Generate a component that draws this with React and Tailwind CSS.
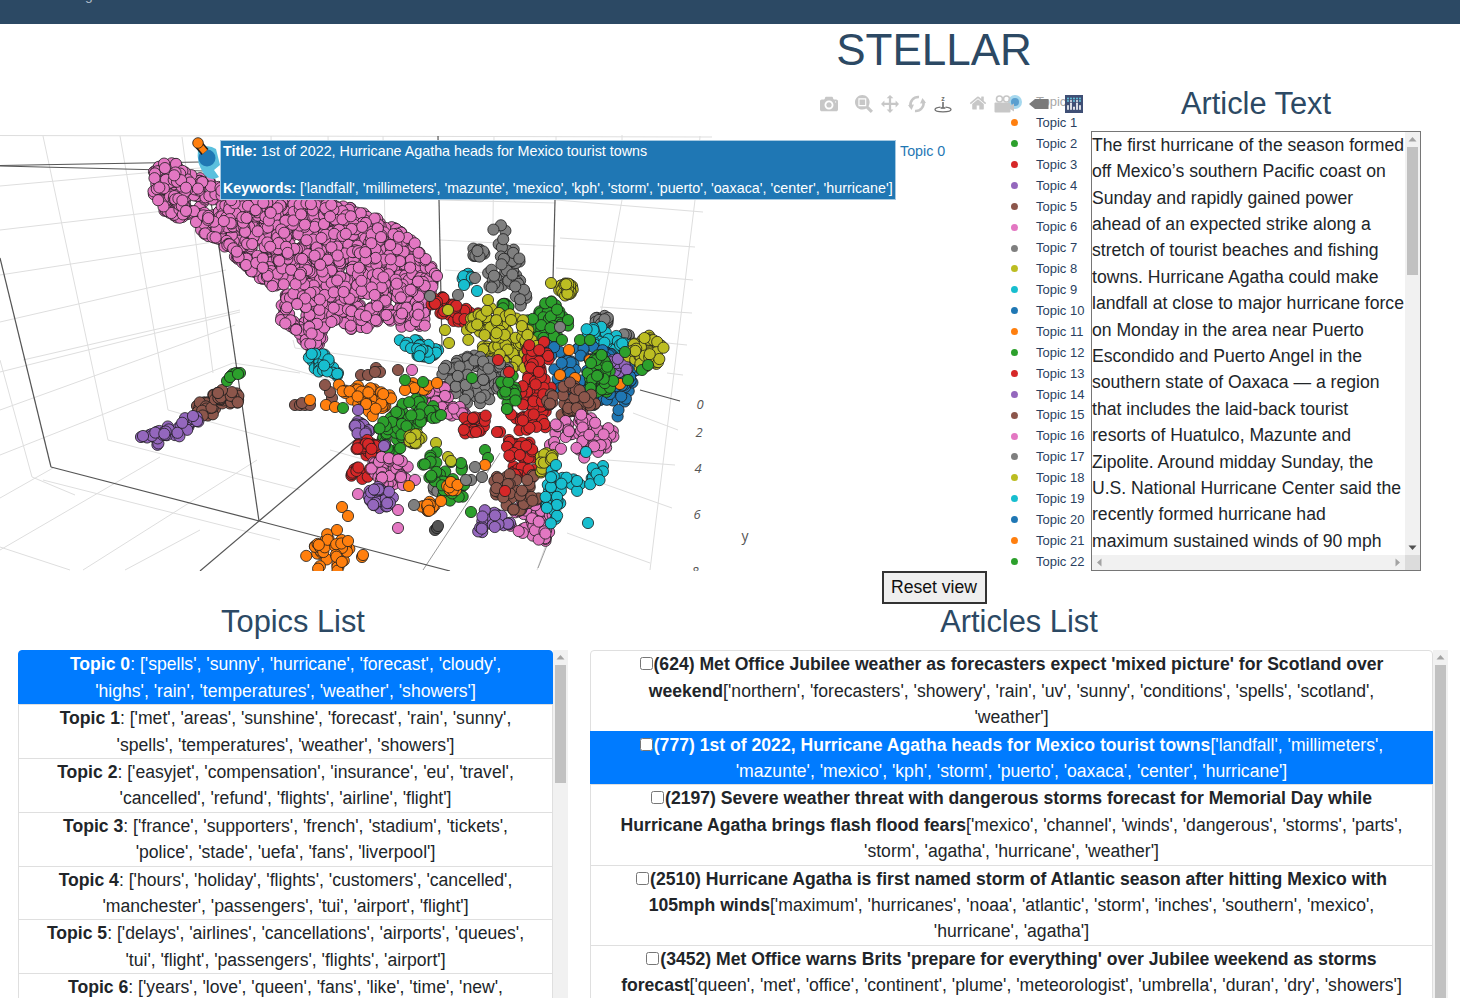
import React from "react";

const C = { blue:"#1f77b4", orange:"#ff7f0e", green:"#2ca02c", red:"#d62728", purple:"#9467bd", brown:"#8c564b", pink:"#e377c2", gray:"#7f7f7f", olive:"#bcbd22", cyan:"#17becf" };

function rng(seed){ let a=seed; return ()=>{ a|=0; a=a+0x6D2B79F5|0; let t=Math.imul(a^a>>>15,1|a); t=t+Math.imul(t^t>>>7,61|t)^t; return ((t^t>>>14)>>>0)/4294967296; }; }
const R = rng(4242);
function inside(p,x,y){ let c=false; for(let i=0,j=p.length-1;i<p.length;j=i++){ const [xi,yi]=p[i],[xj,yj]=p[j]; if((yi>y)!==(yj>y)&&x<(xj-xi)*(y-yi)/(yj-yi)+xi) c=!c; } return c; }
const pts=[];
function P(col,n0,poly,holes=[]){ const n=Math.round(n0*1.5); const xs=poly.map(q=>q[0]),ys=poly.map(q=>q[1]); const x0=Math.min(...xs),x1=Math.max(...xs),y0=Math.min(...ys),y1=Math.max(...ys); let k=0,g=0; while(k<n&&g<n*300){ g++; const x=x0+R()*(x1-x0),y=y0+R()*(y1-y0); if(inside(poly,x,y)&&!holes.some(h=>Math.hypot(h[0]-x,h[1]-y)<h[2]+5.5)){ pts.push([x,y,col]); k++; } } }
function E(col,cx,cy,rx,ry,n0){ const n=Math.round(n0*1.5); for(let i=0;i<n;i++){ const a=R()*6.283,r=Math.sqrt(R()); pts.push([cx+Math.cos(a)*r*rx,cy+Math.sin(a)*r*ry,col]); } }
function S(col,...list){ list.forEach(([x,y])=>pts.push([x,y,col])); }

S(C.red,[303,232]);
P(C.pink,1300,[[150,172],[170,158],[185,172],[230,190],[343,205],[387,222],[413,240],[437,275],[428,300],[425,327],[397,327],[380,320],[360,333],[333,320],[320,345],[313,353],[297,333],[280,323],[283,290],[263,283],[220,243],[163,210],[153,195]],
  [[193,203,2],[210,207,2],[258,247,1],[297,242,1],[290,288,1],[367,302,1],[392,302,1],[297,313,2],[188,222,1],[345,270,0.5]]);
S(C.pink,[437,276]);
P(C.gray,34,[[492,212],[503,225],[516,250],[527,278],[527,305],[520,310],[512,288],[490,288],[484,275],[495,262],[498,240],[491,225]]);
E(C.gray,478,252,7,5,9);
E(C.cyan,467,277,5,4,5); S(C.cyan,[477,291],[464,285]); S(C.gray,[475,278]);
E(C.gray,601,320,8,6,14); E(C.gray,627,336,6,2,4);
E(C.olive,566,289,7,7,26); S(C.olive,[551,283]);
P(C.red,26,[[428,292],[445,298],[482,315],[478,327],[450,322],[430,305]]);
S(C.gray,[430,296],[458,295],[561,326]);
P(C.green,38,[[525,318],[550,297],[570,322],[566,335],[545,340],[525,335]]); E(C.green,505,306,4,3,5); S(C.green,[568,320]);
P(C.olive,75,[[460,325],[490,305],[530,322],[538,350],[520,375],[500,365],[470,345]]);
S(C.olive,[448,310],[445,330],[449,343],[511,320],[488,300]);
P(C.cyan,32,[[583,330],[600,325],[632,345],[620,360],[590,348]]);
P(C.blue,70,[[540,345],[590,345],[640,365],[628,400],[617,418],[595,410],[550,382]]);
E(C.purple,619,366,11,8,15);
P(C.olive,40,[[632,345],[650,335],[667,345],[665,362],[640,368],[628,358]]);
S(C.orange,[569,350],[560,375],[575,378],[620,384],[590,360]);
P(C.red,62,[[528,340],[546,340],[552,380],[546,430],[512,432],[510,400],[526,380]]);
P(C.green,34,[[586,365],[600,350],[615,375],[610,395],[590,392]]); S(C.green,[628,380],[642,370],[648,365],[562,340],[580,340],[590,340],[625,352]);
P(C.brown,32,[[542,400],[570,382],[600,400],[590,416],[555,416],[545,410]]); 
S(C.gray,[560,327]);
P(C.gray,62,[[440,368],[470,352],[508,362],[510,385],[480,410],[462,403],[440,385]]);
S(C.green,[472,378]);
P(C.green,12,[[500,375],[520,375],[515,405],[505,410]]);
S(C.red,[498,360],[509,372]);
// left cyan
P(C.cyan,20,[[302,355],[322,352],[340,370],[335,380],[315,370]]);
P(C.cyan,20,[[395,340],[420,340],[442,352],[425,360],[405,350]]);
S(C.pink,[412,370]);
S(C.brown,[398,370],[332,398],[330,392],[325,385],[361,375],[368,375],[376,368],[380,372],[375,372]);
P(C.pink,16,[[416,390],[448,385],[448,415],[425,412]]);
E(C.pink,458,412,10,6,8);
P(C.orange,36,[[337,382],[360,385],[395,395],[390,405],[375,420],[365,410],[345,395]]);
E(C.orange,420,386,9,5,5); S(C.orange,[405,390],[437,383]);
S(C.brown,[295,405],[300,405],[305,405],[310,405],[302,403]); S(C.orange,[310,400],[326,405],[335,407]); S(C.green,[343,408]); S(C.purple,[358,410]);
E(C.purple,362,428,8,8,16);
P(C.green,55,[[395,402],[430,395],[440,415],[420,430],[400,450],[385,455],[378,430]]);
S(C.green,[405,380],[423,382],[441,415]);
E(C.red,367,448,11,8,22);
S(C.purple,[385,445],[384,446]);
E(C.olive,416,439,8,5,13); S(C.olive,[436,443]);
E(C.red,361,474,14,7,8);
E(C.pink,390,470,20,15,34); S(C.pink,[358,494],[403,485],[398,510],[401,477],[415,480]);
E(C.purple,380,497,13,12,22);
E(C.gray,447,484,18,13,12);
P(C.green,24,[[420,460],[440,450],[467,470],[465,498],[450,505],[430,480]]);
S(C.green,[485,450],[488,458],[461,463],[471,512]);
S(C.olive,[448,457],[451,461]);
E(C.orange,453,486,6,5,9); E(C.orange,428,506,7,5,11);
S(C.orange,[441,501],[485,465],[342,507],[348,516],[409,486]);
S(C.gray,[414,505],[471,480],[482,477],[475,467],[466,480]);
S("#555555",[435,530],[437,528],[438,526]); S(C.pink,[398,528]);
P(C.orange,13,[[303,557],[318,535],[330,530],[328,560],[318,571],[308,571]]);
P(C.orange,11,[[336,540],[350,540],[350,570],[332,571]]); S(C.orange,[362,557],[363,555],[348,541],[337,530]);
// lower right
P(C.pink,38,[[546,425],[585,413],[615,430],[615,445],[585,458],[550,446]]);
P(C.red,16,[[455,420],[490,412],[490,430],[465,436]]); S(C.red,[476,432],[500,432],[497,432],[509,440],[517,452]);
P(C.red,26,[[505,440],[535,440],[535,480],[512,478]]);
P(C.pink,38,[[507,525],[520,500],[555,505],[558,530],[545,542],[525,535]]);
P(C.brown,30,[[492,477],[535,470],[540,497],[522,515],[497,500]]); S(C.red,[505,491]);
P(C.olive,14,[[536,450],[555,452],[548,470],[543,482],[540,470]]);
P(C.purple,18,[[477,508],[510,512],[512,525],[487,530],[478,535]]);
P(C.cyan,32,[[548,470],[575,472],[605,465],[605,480],[585,488],[562,497],[556,520],[552,532],[545,500]]); S(C.cyan,[588,523],[586,452],[556,465]);
// far left
E(C.brown,205,410,11,9,18); E(C.brown,226,398,14,8,22); S(C.brown,[222,390],[218,393]);
S(C.green,[227,381],[231,376],[233,374],[236,373],[240,373],[230,377],[238,374]);
P(C.purple,32,[[145,437],[155,446],[180,437],[200,427],[198,415],[185,418],[155,432]]); S(C.purple,[141,437],[143,436],[197,421],[193,416]);

const light = [
 [43,136,108,440],[120,136,168,410],[182,137,213,373],[0,360,32,477],
 [0,186,200,168],[0,230,215,205],[0,275,226,240],[0,322,226,270],[23,360,240,310],[0,372,240,312],[0,410,235,325],[0,455,233,363],[108,440,300,490],[168,410,300,447],[233,363,300,373],
 [0,547,70,570],[43,480,280,540],[0,550,160,457],[0,498,53,468],[83,570,257,460],[32,477,75,495],[125,570,200,530],
 [695,200,650,570],[622,200,596,340],[494,136,493,223],
 [556,200,703,212],[560,238,695,247],[556,268,693,280],[600,307,692,313],[667,343,687,345],[667,373,683,375],[633,413,678,430],[607,460,675,465],[593,480,672,508],[567,533,650,563],
 [440,200,556,203],[440,240,556,246],[445,270,520,275],[0,135.5,712,137],[271,136,273,205],[328,136,330,205],[383,136,385,225],[556,136,556,200],[622,135,622,200],[700,136,695,200],
 [537,570,550,533],[293,340,295,348],[295,348,440,368],[260,360,358,388],[330,450,430,478],
];
const dark = [
 [0,258,51,467],[51,467,259,521],[259,521,450,571],[218,240,259,521],[259,521,200,571],[259,521,355,440],
 [0,165.5,200,162],[0,166,205,171],[439,200,442,347],[555,200,553,280],[640,390,680,401],[205,171,218,240],[438,136,439,200],
];
const mid = [[423,570,500,453],[538,568,565,500]];

function Plot3D(){
  return (
    <svg className="block" width="1091" height="487" viewBox="0 84 1091 487">
      {light.map((l,i)=><line key={i} x1={l[0]} y1={l[1]} x2={l[2]} y2={l[3]} stroke="#dedede" strokeWidth="1"/>)}
      {mid.map((l,i)=><line key={i} x1={l[0]} y1={l[1]} x2={l[2]} y2={l[3]} stroke="#9a9a9a" strokeWidth="1"/>)}
      {dark.map((l,i)=><line key={i} x1={l[0]} y1={l[1]} x2={l[2]} y2={l[3]} stroke="#555555" strokeWidth="1.2"/>)}
      {pts.map((p,i)=><circle key={i} cx={p[0].toFixed(1)} cy={p[1].toFixed(1)} r="5.6" fill={p[2]} stroke="#1c1c1c" strokeWidth="0.8"/>)}
      {/* hovered marker */}
      <path d="M198 150 Q207 143 216 149 L220 165 L214 170 L219 177 Q210 182 204 174 Q196 163 198 150Z" fill="#5bc0de"/>
      <circle cx="207" cy="158" r="8.5" fill="#1f77b4"/>
      <line x1="199" y1="145" x2="205" y2="152" stroke="#1c1c1c" strokeWidth="9"/>
      <line x1="200" y1="146" x2="205" y2="152" stroke="#ff7f0e" strokeWidth="6"/>
      <circle cx="198" cy="143" r="5.3" fill="#ff7f0e" stroke="#1c1c1c" strokeWidth="0.8"/>
      {[["0",700,409],["2",699,437],["4",698,473],["6",697,519],["8",695,576]].map(([t,x,y])=>(
        <text key={t} x={x} y={y} fontSize="13" fontStyle="italic" fill="#555" textAnchor="middle" fontFamily="Open Sans, sans-serif">{t}</text>
      ))}
      <text x="745" y="541" fontSize="14" fill="#555" textAnchor="middle" fontFamily="Open Sans, sans-serif">y</text>
    </svg>
  );
}

const iconCls="block";
const Camera=()=>(<svg className={iconCls} width="18" height="18" viewBox="0 0 1000 1000"><path fill="#c7c7c7" transform="matrix(1 0 0 -1 0 850)" d="m500 450c-83 0-150-67-150-150 0-83 67-150 150-150 83 0 150 67 150 150 0 83-67 150-150 150z m400 150h-120c-16 0-34 13-39 29l-31 93c-6 15-23 28-40 28h-340c-16 0-34-13-39-28l-31-94c-6-15-23-28-40-28h-120c-55 0-100-45-100-100v-450c0-55 45-100 100-100h800c55 0 100 45 100 100v450c0 55-45 100-100 100z m-400-550c-138 0-250 112-250 250 0 138 112 250 250 250 138 0 250-112 250-250 0-138-112-250-250-250z m365 380c-19 0-35 16-35 35 0 19 16 35 35 35 19 0 35-16 35-35 0-19-16-35-35-35z"/></svg>);
const Zoom=()=>(<svg className={iconCls} width="18" height="18" viewBox="0 0 1000 1000"><path fill="#c7c7c7" transform="matrix(1 0 0 -1 0 850)" d="m1000-25l-250 251c40 63 63 138 63 218 0 224-182 406-407 406-224 0-406-182-406-406s183-406 407-406c80 0 155 22 218 62l250-250 125 125z m-812 250l0 438 437 0 0-438-437 0z m62 375l313 0 0-312-313 0 0 312z"/></svg>);
const Pan=()=>(<svg className={iconCls} width="18" height="18" viewBox="0 0 1000 1000"><path fill="#c7c7c7" transform="matrix(1 0 0 -1 0 850)" d="m1000 350l-187 188 0-125-250 0 0 250 125 0-188 187-187-187 125 0 0-250-250 0 0 125-188-188 186-187 0 125 252 0 0-250-125 0 187-188 188 188-125 0 0 250 250 0 0-126 187 188z"/></svg>);
const Orbit=()=>(<svg className={iconCls} width="18" height="18" viewBox="0 0 18 18"><path d="M2.6 12C1.4 6.5 5.5 1.6 11 2" fill="none" stroke="#c7c7c7" strokeWidth="2.6"/><path d="M0 10L6 9.5L3.5 15Z" fill="#c7c7c7"/><path d="M15.4 6C16.6 11.5 12.5 16.4 7 16" fill="none" stroke="#c7c7c7" strokeWidth="2.6"/><path d="M18 8L12 8.5L14.5 3Z" fill="#c7c7c7"/></svg>);
const Turntable=()=>(<svg className={iconCls} width="18" height="18" viewBox="0 0 18 18"><text x="9" y="5.5" textAnchor="middle" fontSize="7" fontWeight="700" fill="#6f6f6f" fontFamily="Liberation Sans, sans-serif">z</text><rect x="8.2" y="7" width="1.6" height="6" fill="#6f6f6f"/><rect x="6.6" y="12.2" width="4.8" height="1.6" fill="#6f6f6f"/><path d="M6.5 12.2C3 12.6 1 13.5 1 14.6C1 15.9 4.5 16.8 9 16.8C13.5 16.8 17 15.9 17 14.6C17 13.5 15 12.6 11.5 12.2" fill="none" stroke="#6f6f6f" strokeWidth="1.3"/></svg>);
const Home=()=>(<svg className={iconCls} width="18" height="18" viewBox="0 0 928.6 1000"><path fill="#c7c7c7" transform="matrix(1 0 0 -1 0 850)" d="m786 296v-267q0-15-11-26t-25-10h-214v214h-143v-214h-214q-15 0-25 10t-11 26v267q0 1 0 2t0 2l321 264 321-264q1-1 1-4z m124 39l-34-41q-5-5-12-6h-2q-7 0-12 3l-386 322-386-322q-7-4-13-4-7 2-12 7l-35 41q-4 5-3 13t6 12l401 334q18 15 42 15t43-15l136-114v109q0 8 5 13t13 5h107q8 0 13-5t5-13v-227l122-102q5-5 6-12t-4-13z"/></svg>);
const Movie=()=>(<svg className={iconCls} width="20" height="20" viewBox="0 0 20 20"><circle cx="5.5" cy="5" r="3" fill="none" stroke="#c7c7c7" strokeWidth="1.6"/><circle cx="12.5" cy="5" r="3" fill="none" stroke="#c7c7c7" strokeWidth="1.6"/><rect x="0.5" y="8.5" width="16" height="10" rx="1" fill="#c7c7c7"/><path d="M16 12L20 9.5V17.5L16 15Z" fill="#c7c7c7"/></svg>);
const Tag=()=>(<svg className={iconCls} width="20" height="12" viewBox="0 0 20 12"><path d="M0 6L6 1H19.5V11H6Z" fill="#7a7a7a"/></svg>);
const Logo=()=>(<svg className={iconCls} width="18" height="18" viewBox="0 0 18 18"><rect width="18" height="18" fill="#3f4f75"/>{[3,6,9,12,15].map((x,i)=>[<rect key={"b"+i} x={x-0.8} y={[10,7.5,11.5,7.5,10][i]} width="1.6" height={[5,7.5,3.5,7.5,5][i]} rx=".8" fill="#fff"/>,<circle key={"c"+i} cx={x} cy="3.5" r=".9" fill="#69d0e8"/>,<circle key={"d"+i} cx={x} cy="6" r=".9" fill={i%2?"#fff":"#69d0e8"}/>])}</svg>);

/* scrollbar arrows */
const Arrow=({d,col="#a3a3a3"})=>{
  const p={up:"M3.5 9.5L7.5 5L11.5 9.5Z",down:"M3.5 5.5L7.5 10L11.5 5.5Z",left:"M9.5 3.5L5 7.5L9.5 11.5Z",right:"M5.5 3.5L10 7.5L5.5 11.5Z"}[d];
  return <svg className="block" width="15" height="15" viewBox="0 0 15 15"><path d={p} fill={col}/></svg>;
};

const topicsColors=[C.blue,C.orange,C.green,C.red,C.purple,C.brown,C.pink,C.gray,C.olive,C.cyan];

const articleLines="The first hurricane of the season formed off Mexico’s southern Pacific coast on Sunday and rapidly gained power ahead of an expected strike along a stretch of tourist beaches and fishing towns. Hurricane Agatha could make landfall at close to major hurricane force on Monday in the area near Puerto Escondido and Puerto Angel in the southern state of Oaxaca — a region that includes the laid-back tourist resorts of Huatulco, Mazunte and Zipolite. Around midday Sunday, the U.S. National Hurricane Center said the recently formed hurricane had maximum sustained winds of 90 mph";

const topics=[
 ["Topic 0","['spells', 'sunny', 'hurricane', 'forecast', 'cloudy', 'highs', 'rain', 'temperatures', 'weather', 'showers']"],
 ["Topic 1","['met', 'areas', 'sunshine', 'forecast', 'rain', 'sunny', 'spells', 'temperatures', 'weather', 'showers']"],
 ["Topic 2","['easyjet', 'compensation', 'insurance', 'eu', 'travel', 'cancelled', 'refund', 'flights', 'airline', 'flight']"],
 ["Topic 3","['france', 'supporters', 'french', 'stadium', 'tickets', 'police', 'stade', 'uefa', 'fans', 'liverpool']"],
 ["Topic 4","['hours', 'holiday', 'flights', 'customers', 'cancelled', 'manchester', 'passengers', 'tui', 'airport', 'flight']"],
 ["Topic 5","['delays', 'airlines', 'cancellations', 'airports', 'queues', 'tui', 'flight', 'passengers', 'flights', 'airport']"],
 ["Topic 6","['years', 'love', 'queen', 'fans', 'like', 'time', 'new',"],
];
const articles=[
 ["(624) Met Office Jubilee weather as forecasters expect 'mixed picture' for Scotland over weekend","['northern', 'forecasters', 'showery', 'rain', 'uv', 'sunny', 'conditions', 'spells', 'scotland', 'weather']"],
 ["(777) 1st of 2022, Hurricane Agatha heads for Mexico tourist towns","['landfall', 'millimeters', 'mazunte', 'mexico', 'kph', 'storm', 'puerto', 'oaxaca', 'center', 'hurricane']"],
 ["(2197) Severe weather threat with dangerous storms forecast for Memorial Day while Hurricane Agatha brings flash flood fears","['mexico', 'channel', 'winds', 'dangerous', 'storms', 'parts', 'storm', 'agatha', 'hurricane', 'weather']"],
 ["(2510) Hurricane Agatha is first named storm of Atlantic season after hitting Mexico with 105mph winds","['maximum', 'hurricanes', 'noaa', 'atlantic', 'storm', 'inches', 'southern', 'mexico', 'hurricane', 'agatha']"],
 ["(3452) Met Office warns Brits 'prepare for everything' over Jubilee weekend as storms forecast","['queen', 'met', 'office', 'continent', 'plume', 'meteorologist', 'umbrella', 'duran', 'dry', 'showers']"],
];

export default function App(){
  return (
    <div className="h-[998px] w-full overflow-hidden bg-white text-[#212529] font-['Liberation_Sans',Arial,sans-serif]">
      <nav className="relative h-6 overflow-hidden bg-[#2c4964]">
        <span className="absolute left-[85px] top-[-14px] text-[14px] leading-[18px] text-[#aab8c5]">g</span>
      </nav>
      <div className="pl-[408px]">
        <h1 className="h-[60px] text-center text-[44px] leading-[52px] text-[#2c4964]">STELLAR</h1>
      </div>

      <div className="flex h-[487px] items-start">
        <div className="relative h-[487px] w-[1091px] shrink-0 overflow-hidden">
          <Plot3D />

          {/* legend */}
          <div className="absolute left-[1008px] top-[7.4px] flex flex-col text-[13px] text-[#2a3f5f]">
            {Array.from({length:23},(_,i)=>(
              <div key={i} className="flex h-[20.9px] items-center">
                <span className="flex w-[28px] justify-start pl-[3px]">
                  <span className={i===0?"block h-[8px] w-[8px] rounded-full bg-[#5a9fcf] shadow-[0_0_0_3px_#a6d8ee]":"block h-[7px] w-[7px] rounded-full"} style={i===0?undefined:{backgroundColor:topicsColors[i%10]}}></span>
                </span>
                <span className={i===0?"whitespace-nowrap text-[#a8a8a8]":"whitespace-nowrap"}>Topic {i}</span>
              </div>
            ))}
          </div>

          {/* mode bar */}
          <div className="absolute left-[816px] top-[11px] flex h-[18px] items-center gap-[8.7px]">
            <div className="flex"><span className="flex w-[26.3px] justify-center"><Camera/></span></div>
            <div className="flex">
              <span className="flex w-[26.3px] justify-center"><Zoom/></span>
              <span className="flex w-[26.3px] justify-center"><Pan/></span>
              <span className="flex w-[26.3px] justify-center"><Orbit/></span>
              <span className="flex w-[26.3px] justify-center"><Turntable/></span>
            </div>
            <div className="flex">
              <span className="flex w-[26.3px] justify-center"><Home/></span>
              <span className="flex w-[26.3px] justify-center"><Movie/></span>
            </div>
            <div className="flex"><span className="flex w-[26.3px] justify-center"><Tag/></span></div>
            <div className="flex"><span className="flex w-[26.3px] justify-center"><Logo/></span></div>
          </div>

          {/* hover label */}
          <div className="absolute left-[220px] top-[56px] h-[60px] w-[676px] border border-[#a5c9e1] bg-[#1f77b4] pl-[2px] pt-[1px] text-[14.3px] leading-[18.5px] text-white whitespace-nowrap">
            <div><b>Title:</b> 1st of 2022, Hurricane Agatha heads for Mexico tourist towns</div>
            <div>&nbsp;</div>
            <div><b>Keywords:</b> ['landfall', 'millimeters', 'mazunte', 'mexico', 'kph', 'storm', 'puerto', 'oaxaca', 'center', 'hurricane']</div>
          </div>
          <span className="absolute left-[900px] top-[58px] text-[14.3px] leading-[18px] text-[#1f77b4]">Topic 0</span>
        </div>

        <div className="w-[330px] shrink-0">
          <h2 className="pt-px mb-[7.7px] text-center text-[30.8px] leading-[38px] text-[#2c4964]">Article Text</h2>
          <div className="grid h-[440px] grid-cols-[313px_15px] grid-rows-[423px_15px] border border-[#767676] text-[17.6px] leading-[26.4px]">
            <div className="overflow-hidden">{articleLines}</div>
            <div className="flex flex-col bg-[#f1f1f1]">
              <Arrow d="up"/>
              <div className="mx-[2px] h-[128px] bg-[#c1c1c1]"></div>
              <div className="flex-1"></div>
              <Arrow d="down" col="#505050"/>
            </div>
            <div className="flex justify-between bg-[#f1f1f1]">
              <Arrow d="left"/>
              <Arrow d="right"/>
            </div>
            <div className="bg-[#dcdcdc]"></div>
          </div>
        </div>
      </div>

      <div className="flex h-[33px] justify-center pl-[408px]">
        <button className="h-[33px] w-[105px] border-2 border-[#333] bg-[#efefef] text-[17.6px] text-[#111]">Reset view</button>
      </div>

      <div className="flex items-start">
        <section className="ml-[18px] w-[550px] shrink-0">
          <h2 className="mb-[11.3px] pt-px text-center text-[30.8px] leading-[34px] text-[#2c4964]">Topics List</h2>
          <div className="flex h-[600px] text-[17.6px] leading-[26.4px]">
            <div className="min-w-0 flex-1 overflow-hidden">
              {topics.map(([t,k],i)=>(
                <div key={t} className={i===0?"relative -mb-px rounded-t border border-[#007bff] bg-[#007bff] px-6 text-center text-white":"relative -mb-px border border-[#dfdfdf] px-6 text-center"}>
                  <b>{t}</b>: {k}
                </div>
              ))}
            </div>
            <div className="flex w-[15px] shrink-0 flex-col bg-[#f1f1f1]">
              <Arrow d="up"/>
              <div className="mx-[2px] h-[118px] bg-[#c1c1c1]"></div>
            </div>
          </div>
        </section>
        <section className="ml-[22px] w-[858px] shrink-0">
          <h2 className="mb-[11.3px] pt-px text-center text-[30.8px] leading-[34px] text-[#2c4964]">Articles List</h2>
          <div className="flex h-[600px] text-[17.6px] leading-[26.4px]">
            <div className="min-w-0 flex-1 overflow-hidden">
              {articles.map(([t,k],i)=>(
                <div key={t} className={(i===1?"relative -mb-px border border-[#007bff] bg-[#007bff] text-white":"relative -mb-px border border-[#dfdfdf]")+(i===0?" rounded-t":"")+" px-6 text-center"}>
                  <input type="checkbox" readOnly className="mr-px align-baseline" />
                  <b>{t}</b>{k}
                </div>
              ))}
            </div>
            <div className="flex w-[15px] shrink-0 flex-col bg-[#f1f1f1]">
              <Arrow d="up"/>
              <div className="mx-[2px] h-[400px] bg-[#c1c1c1]"></div>
            </div>
          </div>
        </section>
      </div>
    </div>
  );
}
